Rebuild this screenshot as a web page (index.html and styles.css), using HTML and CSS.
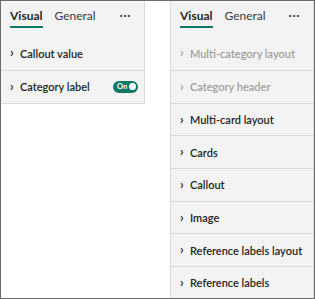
FILE: index.html
```html
<!DOCTYPE html>
<html lang="en">
<head>
    <meta charset="UTF-8">
    <meta name="viewport" content="width=device-width, initial-scale=1.0">
    <title>Format pane</title>
    <link rel="stylesheet" href="styles.css">
</head>
<body>
    <div class="frame">
        <!-- Painel esquerdo -->
        <div class="pane pane-left">
            <div class="tabs">
                <span class="tab active">Visual</span>
                <span class="tab">General</span>
                <span class="more">&middot;&middot;&middot;</span>
            </div>
            <div class="card">
                <span class="chevron">&rsaquo;</span>
                <span class="label">Callout value</span>
            </div>
            <div class="card">
                <span class="chevron">&rsaquo;</span>
                <span class="label">Category label</span>
                <span class="toggle">On<span class="knob"></span></span>
            </div>
        </div>

        <!-- Painel direito -->
        <div class="pane pane-right">
            <div class="tabs">
                <span class="tab active">Visual</span>
                <span class="tab">General</span>
                <span class="more">&middot;&middot;&middot;</span>
            </div>
            <div class="card disabled">
                <span class="chevron">&rsaquo;</span>
                <span class="label">Multi-category layout</span>
            </div>
            <div class="card disabled">
                <span class="chevron">&rsaquo;</span>
                <span class="label">Category header</span>
            </div>
            <div class="card">
                <span class="chevron">&rsaquo;</span>
                <span class="label">Multi-card layout</span>
            </div>
            <div class="card">
                <span class="chevron">&rsaquo;</span>
                <span class="label">Cards</span>
            </div>
            <div class="card">
                <span class="chevron">&rsaquo;</span>
                <span class="label">Callout</span>
            </div>
            <div class="card">
                <span class="chevron">&rsaquo;</span>
                <span class="label">Image</span>
            </div>
            <div class="card">
                <span class="chevron">&rsaquo;</span>
                <span class="label">Reference labels layout</span>
            </div>
            <div class="card">
                <span class="chevron">&rsaquo;</span>
                <span class="label">Reference labels</span>
            </div>
        </div>
    </div>
</body>
</html>
```

FILE: styles.css
```css
body {
    margin: 0;
    font-family: Lato, "Open Sans", Arial, sans-serif;
    background-color: white;
}
.frame {
    width: 315px;
    height: 299px;
    box-sizing: border-box;
    border: 1px solid #6b6b6b;
    display: flex;
    align-items: flex-start;
    gap: 25px;
    overflow: hidden;
}
.pane {
    width: 144px;
    box-sizing: border-box;
    background: #f3f3f3;
    border-right: 1px solid #dcdcdc;
}
.pane-left {
    border-bottom: 1px solid #dcdcdc;
}
.pane-right {
    border-left: 1px solid #dcdcdc;
    height: 100%;
}
.tabs {
    height: 35px;
    display: flex;
    align-items: flex-start;
    padding: 7px 0 0 9px;
    box-sizing: border-box;
}
.tab {
    font-size: 12px;
    color: #3b3a39;
    margin-right: 12px;
    padding-bottom: 3px;
    line-height: 15px;
}
.tab.active {
    font-weight: 700;
    color: #252423;
    border-bottom: 2px solid #117865;
}
.more {
    margin-left: auto;
    margin-right: 13px;
    font-size: 12px;
    font-weight: 700;
    letter-spacing: 0.5px;
    color: #444;
    line-height: 14px;
}
.card {
    height: 32.7px;
    box-sizing: border-box;
    border-top: 1px solid #dcdcdc;
    display: flex;
    align-items: center;
    padding: 0 6px 0 9px;
    font-size: 11px;
    font-weight: 600;
    color: #252423;
}
.tabs + .card {
    border-top: none;
    height: 34px;
}
.card.disabled {
    color: #a19f9d;
}
.chevron {
    font-size: 13px;
    width: 10px;
    line-height: 12px;
    margin-top: -2px;
}
.toggle {
    margin-left: auto;
    width: 25px;
    height: 12px;
    border-radius: 6px;
    background: #117865;
    color: white;
    font-size: 7.5px;
    font-weight: 700;
    display: flex;
    align-items: center;
    padding-left: 4px;
    box-sizing: border-box;
    gap: 2px;
}
.knob {
    width: 7px;
    height: 7px;
    border-radius: 50%;
    background: white;
}
```
